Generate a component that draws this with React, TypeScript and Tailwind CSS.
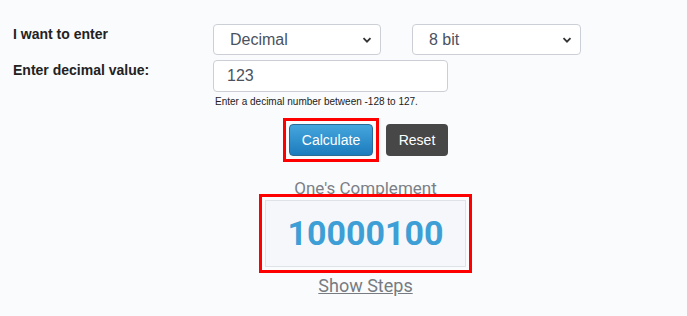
import { useState } from 'react';

function Chevron() {
  return (
    <svg width="10" height="10" viewBox="0 0 10 10" className="pointer-events-none absolute right-[9px] top-[11px]">
      <path d="M1.5 3.2 L5 6.7 L8.5 3.2" fill="none" stroke="#333" strokeWidth="1.8" />
    </svg>
  );
}

function Select({ value, options, width }: { value: string; options: string[]; width: string }) {
  return (
    <div className={`relative ${width}`}>
      <select
        defaultValue={value}
        className="h-[31px] w-full appearance-none rounded-[4px] border border-[#ccd0d6] bg-white pl-[16px] text-[16px] text-[#4a5260] outline-none"
      >
        {options.map(o => (
          <option key={o}>{o}</option>
        ))}
      </select>
      <Chevron />
    </div>
  );
}

export default function App() {
  const [value, setValue] = useState('123');

  return (
    <div className="h-[316px] w-[687px] bg-[#fafbfc] font-['Liberation_Sans',Arial,sans-serif]">
      <div className="pl-[13px] pt-[24px]">
        {/* Input rows */}
        <div className="flex">
          <div className="w-[200px] text-[14px] leading-[20px] font-bold text-[#222]">I want to enter</div>
          <div className="flex gap-[31px]">
            <Select value="Decimal" options={['Decimal', 'Binary']} width="w-[168px]" />
            <Select value="8 bit" options={['8 bit', '16 bit', '32 bit']} width="w-[169px]" />
          </div>
        </div>
        <div className="mt-[5px] flex">
          <div className="w-[200px] text-[14px] leading-[20px] font-bold text-[#222]">Enter decimal value:</div>
          <div>
            <input
              value={value}
              onChange={e => setValue(e.target.value)}
              className="h-[32px] w-[235px] rounded-[4px] border border-[#ccd0d6] bg-white pl-[13px] text-[16px] text-[#4a5260] outline-none"
            />
            <div className="mt-[4px] pl-[2px] text-[10px] leading-[12px] text-[#222]">
              Enter a decimal number between -128 to 127.
            </div>
          </div>
        </div>
      </div>

      {/* Actions + result */}
      <div className="flex flex-col items-center pl-[44px]">
        <div className="mt-[10px] flex items-center gap-[7px]">
          <div className="border-[3px] border-[#ff0000] p-[3px]">
            <button className="h-[32px] w-[84px] rounded-[4px] border border-[#2a6a96] bg-gradient-to-b from-[#45a6dd] to-[#1b7cbd] text-[14px] text-white">
              Calculate
            </button>
          </div>
          <button className="h-[32px] w-[62px] rounded-[4px] bg-[#474747] text-[14px] text-white">Reset</button>
        </div>

        <div className="mt-[17px] font-['Roboto',sans-serif] text-[17px] leading-[18px] text-[#7b7f86]">One's Complement</div>
        <div className="-mt-[3px] border-[3px] border-[#ff0000] p-[3px]">
          <div className="flex h-[67px] w-[201px] items-center justify-center border border-[#dfe2e6] bg-[#f6f7fa] font-['Roboto',sans-serif] text-[34px] font-bold text-[#3d9fd5]">
            10000100
          </div>
        </div>
        <a href="#" className="mt-[2px] font-['Roboto',sans-serif] text-[18px] leading-[22px] text-[#777b82] underline">
          Show Steps
        </a>
      </div>
    </div>
  );
}
